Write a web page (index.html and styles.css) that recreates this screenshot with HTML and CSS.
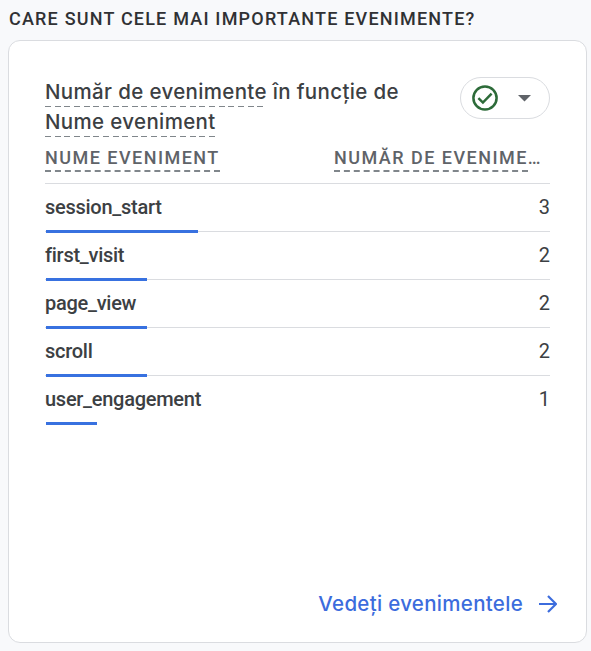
FILE: index.html
```html
<!DOCTYPE html>
<html lang="ro">
<head>
<meta charset="utf-8">
<title>Evenimente</title>
<link rel="stylesheet" href="styles.css">
</head>
<body>
<h2 class="section-title">Care sunt cele mai importante evenimente?</h2>
<section class="card">
  <header class="card-header">
    <h3 class="card-title"><span class="term">Număr de evenimente</span> <span>în funcție de</span><br><span class="term">Nume eveniment</span></h3>
    <button class="status" aria-label="Calitatea datelor">
      <svg class="check" viewBox="0 0 26 26"><circle cx="13" cy="13" r="11.6"/><path d="M6.4 13.2l4.5 4.4 8.7-8.9"/></svg>
      <svg class="caret" viewBox="0 0 13 7"><path d="M0 0h13L6.5 6.5z"/></svg>
    </button>
  </header>
  <div class="columns">
    <span class="column">Nume eveniment</span>
    <span class="column-value"><span class="column">Număr de evenime</span><span class="more">…</span></span>
  </div>
  <ul class="rows">
    <li class="row"><span class="name">session_start</span><span>3</span><i class="bar" style="width:152px"></i></li>
    <li class="row"><span class="name">first_visit</span><span>2</span><i class="bar" style="width:101px"></i></li>
    <li class="row"><span class="name">page_view</span><span>2</span><i class="bar" style="width:101px"></i></li>
    <li class="row"><span class="name">scroll</span><span>2</span><i class="bar" style="width:101px"></i></li>
    <li class="row"><span class="name">user_engagement</span><span>1</span><i class="bar" style="width:51px"></i></li>
  </ul>
  <a class="link"><span>Vedeți evenimentele</span><svg class="arrow" viewBox="0 0 18 18"><path d="M0 9h16.5M9 1l8 8-8 8"/></svg></a>
</section>
</body>
</html>
```
FILE: styles.css
```css
* { box-sizing: border-box; }
body {
  margin: 0;
  height: 651px;
  padding: 7px 4px 8px 8px;
  display: flex;
  flex-direction: column;
  overflow: hidden;
  background: #f8f9fb;
  color: #3c4043;
  font-family: Roboto, sans-serif;
}
.section-title {
  margin: 0 0 9px 1px;
  font-size: 18px;
  line-height: 24px;
  font-weight: 500;
  letter-spacing: 1.2px;
  text-transform: uppercase;
  white-space: nowrap;
  color: #303134;
}
.card {
  flex: 1;
  display: flex;
  flex-direction: column;
  padding: 36px 28px 23px 36px;
  border: 1px solid #dadce0;
  border-radius: 12px;
  background: #fff;
}
.card-header {
  display: flex;
  justify-content: space-between;
  height: 66px;
  margin-right: 8px;
}
.card-title {
  margin: 0;
  font: 450 20.5px/30px Inter, sans-serif;
  letter-spacing: 0.35px;
  white-space: nowrap;
}
.term {
  display: inline-block;
  height: 30px;
  background: repeating-linear-gradient(90deg, #80868b 0 6px, transparent 6px 9.65px) 0 29px / 100% 1px no-repeat;
}
.status {
  display: flex;
  align-items: center;
  width: 90px;
  height: 42px;
  padding: 0 18px 0 11px;
  justify-content: space-between;
  border: 1px solid #dadce0;
  border-radius: 21px;
  background: #fff;
}
.check { width: 26px; height: 26px; fill: none; stroke: #2d6b39; stroke-width: 2.5; }
.caret { width: 13px; height: 7px; fill: #5f6368; }
.columns {
  display: flex;
  justify-content: space-between;
  height: 41px;
  margin-right: 8px;
  border-bottom: 1px solid #dadce0;
  color: #5f6368;
  font-size: 18px;
  font-weight: 500;
  line-height: 29px;
  letter-spacing: 1.47px;
  text-transform: uppercase;
  white-space: nowrap;
}
.column { display: inline-block; height: 29px; border-bottom: 2px dashed #80868b; }
.column-value { display: flex; width: 216px; }
.rows {
  list-style: none;
  margin: 0 8px 0 0;
  padding: 0;
  font-size: 20px;
}
.row {
  position: relative;
  display: flex;
  justify-content: space-between;
  height: 48px;
  line-height: 46px;
  border-bottom: 1px solid #dadce0;
}
.row:last-child { border-color: transparent; }
.name { font-weight: 500; letter-spacing: -0.27px; }
.bar { position: absolute; left: 1px; bottom: -2px; height: 3px; background: #3871e0; }
.link {
  display: flex;
  align-items: center;
  justify-content: flex-end;
  gap: 16px;
  margin: auto 1px 0 0;
  color: #3c6cdd;
  font: 450 20.5px/30px Inter, sans-serif;
  letter-spacing: 0.3px;
}
.arrow { width: 18px; height: 18px; fill: none; stroke: currentColor; stroke-width: 2.2; }
```
